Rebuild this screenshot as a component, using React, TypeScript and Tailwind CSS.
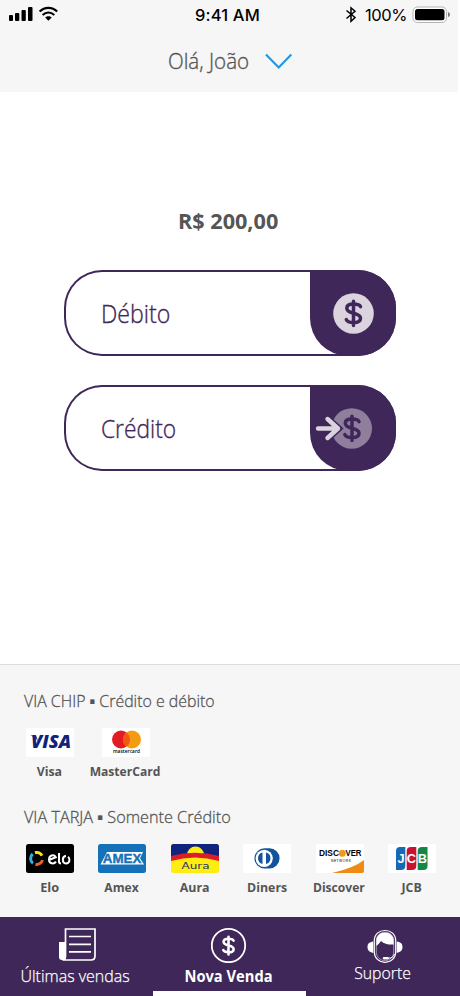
import type { ReactNode } from 'react';

function Condensed({ children, className = '' }: { children: ReactNode; className?: string }) {
  return <span className={`block w-max whitespace-nowrap ${className}`}>{children}</span>;
}

function StatusBar() {
  return (
    <div className="flex h-[30px] items-center pl-2 pr-1 font-['Inter'] text-[16.5px] text-black">
      <svg width="54" height="20" viewBox="0 0 54 20" className="shrink-0">
        <rect x="1" y="10" width="4" height="6" rx="1" />
        <rect x="7" y="8" width="4.3" height="8" rx="1" />
        <rect x="13.5" y="5" width="4.3" height="11" rx="1" />
        <rect x="20" y="2" width="4.5" height="14" rx="1" />
        <g fill="none" stroke="black" strokeWidth="2.1">
          <path d="M31.6 6.6C36.7 1.6 44.1 1.6 49.2 6.6" />
          <path d="M34.6 10.1C38.2 6.7 42.7 6.7 46.3 10.1" />
        </g>
        <path d="M37.2 12.6C39 10.8 42 10.8 43.7 12.6L40.4 15.8Z" />
      </svg>
      <span className="ml-[133px] w-[67px] whitespace-nowrap font-medium tracking-[0.15px]">9:41 AM</span>
      <svg width="12" height="18" viewBox="0 0 12 18" className="ml-[83px] shrink-0" fill="none" stroke="black" strokeWidth="1.5">
        <path d="M1.5 4.5L10 11.5L6 15.2V1.8L10 5.2L1.5 12.5" />
      </svg>
      <span className="ml-2 w-[43px] whitespace-nowrap tracking-[-0.4px]">100%</span>
      <svg width="40" height="18" viewBox="0 0 40 18" className="ml-1 shrink-0">
        <rect x="1" y="1" width="33.5" height="15.5" rx="4.5" fill="white" stroke="#b5b5b5" />
        <rect x="3" y="3" width="29.5" height="11.3" rx="2.5" />
        <path d="M36 6Q38 6.5 38 8.5T36 11Z" fill="#777" />
      </svg>
    </div>
  );
}

function Dollar({ x, y, s = 1, color }: { x: number; y: number; s?: number; color: string }) {
  return (
    <g transform={`translate(${x} ${y}) scale(${s})`} fill="none" stroke={color} strokeWidth="3.5" strokeLinecap="round">
      <path d="M7 -6.6C6 -9 3 -9.2 0 -9.2C-4 -9.2 -6.7 -7.8 -6.7 -5C-6.7 -1.5 -3 -.7 0 0C3.5 .8 7 1.7 7 5C7 8.2 4 9.3 0 9.3C-3.5 9.3 -6.3 8.3 -7.2 6.3M0 -12V12.3" />
    </g>
  );
}

function PayButton({ label, labelClass, children }: { label: string; labelClass: string; children: ReactNode }) {
  return (
    <button className="flex h-[86px] w-[332px] items-center rounded-[38px] bg-[#3f2759] pl-0.5 text-left">
      <span className="flex h-[82px] w-[284px] shrink-0 items-center rounded-l-[36px] bg-white">
        <Condensed className={`ml-[35px] text-[25px] leading-[34px] text-[#3f2759] ${labelClass}`}>{label}</Condensed>
      </span>
      <span className="-ml-10 h-[86px] w-[86px] shrink-0 rounded-r-[38px] rounded-bl-[38px] bg-[#3f2759]">
        <svg width="86" height="86" viewBox="0 0 86 86">{children}</svg>
      </span>
    </button>
  );
}

function Card({ name, labelClass, children }: { name: string; labelClass: string; children: ReactNode }) {
  return (
    <div className="flex w-12 flex-col items-center">
      <svg width="48" height="29" viewBox="0 0 48 29" className="block">{children}</svg>
      <Condensed className={`-ml-px mt-[5px] text-[13px] font-bold leading-[18px] text-[#555] ${labelClass}`}>{name}</Condensed>
    </div>
  );
}

export default function App() {
  return (
    <div className="flex h-[996px] w-[460px] flex-col overflow-hidden bg-white font-['Open_Sans',sans-serif]">
      <header className="h-[92px] w-[458px] bg-[#f6f6f6]">
        <StatusBar />
        <div className="flex h-[61px] items-center pl-[168px]">
          <div className="w-[97px]">
            <Condensed className="origin-left scale-x-[0.935] text-[22px] font-light text-[#555] [-webkit-text-stroke:0.35px_#555]">Olá, João</Condensed>
          </div>
          <svg width="28" height="18" viewBox="0 0 28 18" fill="none" stroke="#2196e3" strokeWidth="2.1"><path d="M1 2.5L13.7 15.5L26.3 2.5" /></svg>
        </div>
      </header>
      <main className="flex h-[572px] flex-col pl-[63.5px] pt-[114px]">
        <Condensed className="ml-[114.5px] h-[30px] origin-left scale-x-[1.03] text-[21px] font-bold leading-[30px] text-[#555]">R$ 200,00</Condensed>
        <div className="mt-[34px] flex flex-col gap-[29px]">
          <PayButton label="Débito" labelClass="origin-left scale-x-[0.925] font-light [-webkit-text-stroke:0.35px_#3f2759]">
            <circle cx="43.5" cy="43.5" r="20.3" fill="#dbd4df" />
            <Dollar x={43.5} y={43.3} color="#3f2759" />
          </PayButton>
          <PayButton label="Crédito" labelClass="origin-left scale-x-[0.91] font-light [-webkit-text-stroke:0.35px_#3f2759]">
            <circle cx="41.7" cy="43.5" r="20.3" fill="#8f7e9c" />
            <Dollar x={42} y={43.3} color="#3f2759" />
            <path d="M8 43.5H28M17.5 34L28 43.5L17.5 53" fill="none" stroke="#3f2759" strokeWidth="7.5" strokeLinecap="round" />
            <path d="M8 43.5H28M17.5 34L28 43.5L17.5 53" fill="none" stroke="#dbd4df" strokeWidth="4.4" strokeLinecap="round" strokeLinejoin="round" />
          </PayButton>
        </div>
      </main>
      <section className="h-[253px] border-t border-[#ddd] bg-[#f6f6f6] pl-6 pt-[24px]">
        <Condensed className="origin-left scale-x-[0.935] text-[17px] font-light leading-6 text-[#555] [-webkit-text-stroke:0.3px_#555]">VIA CHIP ▪ Crédito e débito</Condensed>
        <div className="ml-[2px] mt-[15px] flex gap-7">
          <Card name="Visa" labelClass="scale-x-[0.95]">
            <rect width="48" height="29" fill="white" />
            <text x="5" y="20" fontFamily="Open Sans" fontWeight="800" fontStyle="italic" fontSize="18" textLength="40" lengthAdjust="spacingAndGlyphs" fill="#10227c">VISA</text>
            <path d="M4 7.5H10L12 13Q9 8.5 4 7.5" fill="#10227c" />
          </Card>
          <Card name="MasterCard" labelClass="scale-x-[0.93]">
            <rect width="48" height="29" fill="white" />
            <circle cx="19" cy="11.5" r="9" fill="#e31b23" />
            <circle cx="30" cy="11.5" r="9" fill="#f39c12" />
            <path d="M24.5 4.4A9 9 0 0 1 24.5 18.6A9 9 0 0 1 24.5 4.4" fill="#f15a10" />
            <text x="11" y="25" fontFamily="Open Sans" fontWeight="600" fontSize="4.8" textLength="27">mastercard</text>
          </Card>
        </div>
        <Condensed className="mt-[25px] origin-left scale-x-[0.955] text-[17px] font-light leading-6 text-[#555] [-webkit-text-stroke:0.3px_#555]">VIA TARJA ▪ Somente Crédito</Condensed>
        <div className="ml-[2px] mt-[15px] flex gap-[24.4px]">
          <Card name="Elo" labelClass="scale-x-[0.98]">
            <rect width="48" height="29" rx="2.5" />
            <g fill="none" strokeWidth="3"><path d="M9 8.7A5.8 5.8 0 0 1 16 11.7" stroke="#fee51b" /><path d="M16.5 16A5.8 5.8 0 0 1 9.5 20.2" stroke="#ef6226" /><path d="M7 19.2A5.8 5.8 0 0 1 6.7 10" stroke="#35aee0" /></g>
            <g fill="none" stroke="white" strokeWidth="2"><path d="M23 16L29.8 13.2C28 10 23 11 23 15.5C23 20 28 20.5 30 17.6M33 9V18Q33.2 19.5 35 19.5M40 12C36 12 35.6 19.2 40 19.5C44 19.3 44.3 14.5 42 12.8" /></g>
          </Card>
          <Card name="Amex" labelClass="scale-x-[0.93]">
            <rect width="48" height="29" rx="2.5" fill="#1672b8" />
            <path d="M2.5 20.5L9 8H45L42 14.2L46 20.5Z" fill="white" />
            <text x="4.8" y="18.8" fontFamily="Liberation Sans" fontWeight="700" fontSize="12.5" textLength="38.5" lengthAdjust="spacingAndGlyphs" fill="#1672b8" stroke="#1672b8" strokeWidth=".4">AMEX</text>
          </Card>
          <Card name="Aura" labelClass="scale-x-[0.95]">
            <rect width="48" height="29" rx="2.5" fill="#ffed12" />
            <path d="M0 13V2.5Q0 0 2.5 0H45.5Q48 0 48 2.5V13Z" fill="#11247d" />
            <circle cx="24.5" cy="11" r="8.5" fill="#ffed12" />
            <path d="M0 12Q24 5.5 48 12V17Q24 10 0 17Z" fill="#dc1d28" />
            <text x="10.5" y="24.5" fontFamily="DejaVu Sans" fontWeight="400" fontSize="8" textLength="28" lengthAdjust="spacingAndGlyphs" fill="#243163">Aura</text>
          </Card>
          <Card name="Diners" labelClass="scale-x-[0.95]">
            <rect width="48" height="29" fill="white" />
            <path d="M21.5 4.2H26.5A10 10 0 0 1 26.5 24.4H21.5A10 10 0 0 1 21.5 4.2" fill="#12539b" />
            <circle cx="21.2" cy="14.3" r="8.6" fill="white" />
            <path d="M19.5 8.5A6 6 0 0 0 19.5 20.1ZM23 8.5A6 6 0 0 1 23 20.1Z" fill="#12539b" />
          </Card>
          <Card name="Discover" labelClass="scale-x-[0.93]">
            <rect width="48" height="29" fill="white" />
            <path d="M16 29Q38 24 48 16V27Q48 29 46 29Z" fill="#ee8b12" />
            <text x="3" y="12.2" fontFamily="Liberation Sans" fontWeight="700" fontSize="9" textLength="20" lengthAdjust="spacingAndGlyphs">DISC</text>
            <circle cx="26.3" cy="9.2" r="3.5" fill="#f39a17" />
            <text x="29.5" y="12.2" fontFamily="Liberation Sans" fontWeight="700" fontSize="9" textLength="16" lengthAdjust="spacingAndGlyphs">VER</text>
            <text x="15" y="17.6" fontFamily="Liberation Sans" fontSize="3.4" textLength="20">NETWORK</text>
          </Card>
          <Card name="JCB" labelClass="scale-x-[0.95]">
            <rect width="48" height="29" fill="white" />
            <path d="M12 3H17.3V22Q17.3 26 13 26H8V7Q8 3 12 3" fill="#1669b4" />
            <path d="M23 3H28.3V22Q28.3 26 24 26H18.7V7Q18.7 3 23 3" fill="#ca1230" />
            <path d="M34 3H39.5V22Q39.5 26 35.5 26H29.7V7Q29.7 3 34 3" fill="#138743" />
            <text x="9.5 18.8 29.8" y="18.8" fontFamily="Liberation Sans" fontWeight="700" fontSize="12.8" fill="white">JCB</text>
          </Card>
        </div>
      </section>
      <nav className="grid h-[79px] grid-cols-3 bg-[#3f2759] text-[17px] text-white">
        <div className="flex flex-col items-center pt-[10px]">
          <svg width="40" height="36" viewBox="0 0 40 36" fill="none" stroke="white" strokeWidth="1.7"><path d="M8.5 2H38V29Q38 33 34 33H5.5Q8.5 33 8.5 29Z" /><path d="M8 15H2V30Q2 33 5 33H6Q8.5 32 8 28Z" fill="white" stroke="none" /><path d="M12 9.5H34M12 17.3H34M12 24.8H34" /></svg>
          <Condensed className="-ml-[3px] mt-[1px] scale-x-[0.94] font-light leading-6 [-webkit-text-stroke:0.25px_white]">Últimas vendas</Condensed>
        </div>
        <div className="flex flex-col items-center pt-[10px]">
          <svg width="36" height="36" viewBox="0 0 36 36" className="-ml-[2px]"><circle cx="17.5" cy="18.5" r="16.7" fill="none" stroke="white" strokeWidth="1.8" /><Dollar x={17.5} y={18.5} s={0.73} color="white" /></svg>
          <Condensed className="-ml-[3px] mt-[1px] scale-x-[0.89] text-[16.5px] font-bold leading-6">Nova Venda</Condensed>
          <span className="mt-[3px] h-[5px] w-[153px] bg-white" />
        </div>
        <div className="flex flex-col items-center pt-[12px]">
          <svg width="36" height="35" viewBox="0 0 36 35" className="ml-[3px]">
            <path d="M7.3 12C7.3 5 12 1.5 18 1.5S28.7 5 28.7 12V23C28.7 29 24 33.3 18 33.3S7.3 29 7.3 23Z" fill="none" stroke="white" strokeWidth="1.2" />
            <path d="M9.3 23V12C9.3 6.5 13 3.3 18 3.3S26.7 6.5 26.7 12V23C26.7 28 22.5 31.7 18 31.7S9.3 28 9.3 23Z" fill="none" stroke="white" strokeWidth=".5" />
            <path d="M9.3 17V12C9.3 6.5 13 3.5 18 3.5S26.7 6.5 26.7 12V15.5C22 16 17.5 15 14 12Q12 15 9.3 17" fill="white" />
            <path d="M6.3 12.5C2 13 .5 15 .5 18S2 23 6.3 24ZM29.7 12.5C34 13 35.5 15 35.5 18S34 23 29.7 24Z" fill="white" />
            <path d="M17 29.3H20.5" stroke="white" strokeWidth="2.4" strokeLinecap="round" />
            <path d="M21 29H24Q26.5 28 27.5 25" fill="none" stroke="white" strokeWidth="1" />
          </svg>
          <Condensed className="-ml-[2px] -mt-[3px] scale-x-[0.93] font-light leading-6 [-webkit-text-stroke:0.25px_white]">Suporte</Condensed>
        </div>
      </nav>
    </div>
  );
}
